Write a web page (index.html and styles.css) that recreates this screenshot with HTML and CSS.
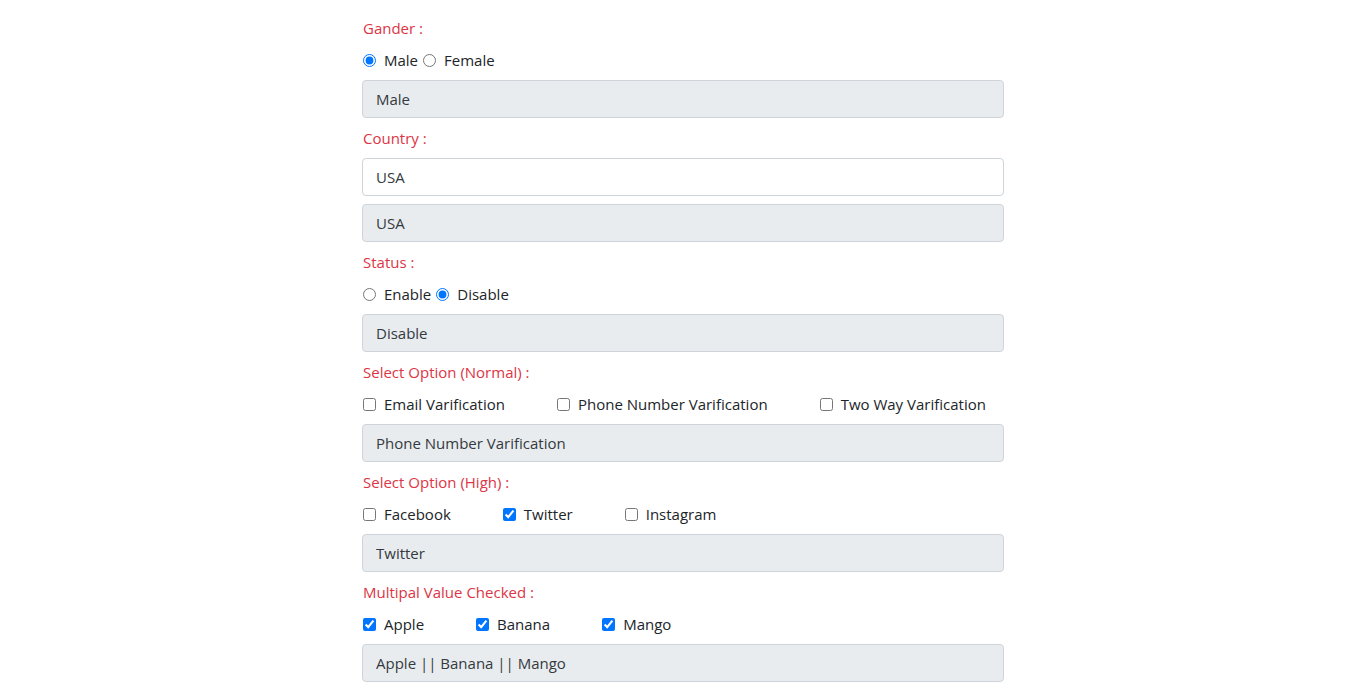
FILE: index.html
```html
<!DOCTYPE html>
<html lang="en">
<head>
<meta charset="utf-8">
<title>Form Values</title>
<link rel="stylesheet" href="styles.css">
</head>
<body>
<div class="wrap">
  <div class="field">
    <label class="title">Gander :</label>
    <div class="opts tight">
      <label class="opt"><input type="radio" name="g" checked><span>Male</span></label>
      <label class="opt"><input type="radio" name="g"><span>Female</span></label>
    </div>
    <input class="ctl" type="text" value="Male" disabled>
  </div>

  <div class="field">
    <label class="title">Country :</label>
    <input class="ctl" type="text" value="USA">
    <input class="ctl" type="text" value="USA" disabled>
  </div>

  <div class="field">
    <label class="title">Status :</label>
    <div class="opts tight">
      <label class="opt"><input type="radio" name="s"><span>Enable</span></label>
      <label class="opt"><input type="radio" name="s" checked><span>Disable</span></label>
    </div>
    <input class="ctl" type="text" value="Disable" disabled>
  </div>

  <div class="field">
    <label class="title">Select Option (Normal) :</label>
    <div class="opts">
      <label class="opt"><input type="checkbox"><span>Email Varification</span></label>
      <label class="opt"><input type="checkbox"><span>Phone Number Varification</span></label>
      <label class="opt"><input type="checkbox"><span>Two Way Varification</span></label>
    </div>
    <input class="ctl" type="text" value="Phone Number Varification" disabled>
  </div>

  <div class="field">
    <label class="title">Select Option (High) :</label>
    <div class="opts">
      <label class="opt"><input type="checkbox"><span>Facebook</span></label>
      <label class="opt"><input type="checkbox" checked><span>Twitter</span></label>
      <label class="opt"><input type="checkbox"><span>Instagram</span></label>
    </div>
    <input class="ctl" type="text" value="Twitter" disabled>
  </div>

  <div class="field">
    <label class="title">Multipal Value Checked :</label>
    <div class="opts">
      <label class="opt"><input type="checkbox" checked><span>Apple</span></label>
      <label class="opt"><input type="checkbox" checked><span>Banana</span></label>
      <label class="opt"><input type="checkbox" checked><span>Mango</span></label>
    </div>
    <input class="ctl" type="text" value="Apple || Banana || Mango" disabled>
  </div>
</div>
</body>
</html>
```
FILE: styles.css
```css
html, body {
  margin: 0;
  padding: 0;
  background: #fff;
}
body {
  font-family: "Open Sans", "Noto Sans", sans-serif;
  font-size: 15px;
  line-height: 24px;
  color: #212529;
}
.wrap {
  width: 642px;
  margin: 0 auto;
  padding-top: 16px;
  display: flex;
  flex-direction: column;
  gap: 8px;
}
.field {
  display: flex;
  flex-direction: column;
  gap: 8px;
}
.title {
  display: block;
  color: #dc3545;
  height: 24px;
  padding-left: 1px;
}
.opts {
  display: flex;
  align-items: center;
  height: 24px;
  gap: 52px;
  padding-left: 1px;
}
.opts.tight {
  gap: 5px;
}
.opt {
  display: flex;
  align-items: center;
  gap: 8px;
  color: #212529;
}
.opt input {
  margin: 0;
  width: 13px;
  height: 13px;
}
.ctl {
  box-sizing: border-box;
  display: block;
  width: 100%;
  height: 38px;
  margin: 0;
  padding: 6px 13px;
  font-family: inherit;
  font-size: 15px;
  line-height: 24px;
  color: #343a40;
  background: #fff;
  border: 1px solid #ced4da;
  border-radius: 4px;
  outline: none;
}
.ctl:disabled {
  background: #e9ecef;
  color: #343a40;
  opacity: 1;
}
```
